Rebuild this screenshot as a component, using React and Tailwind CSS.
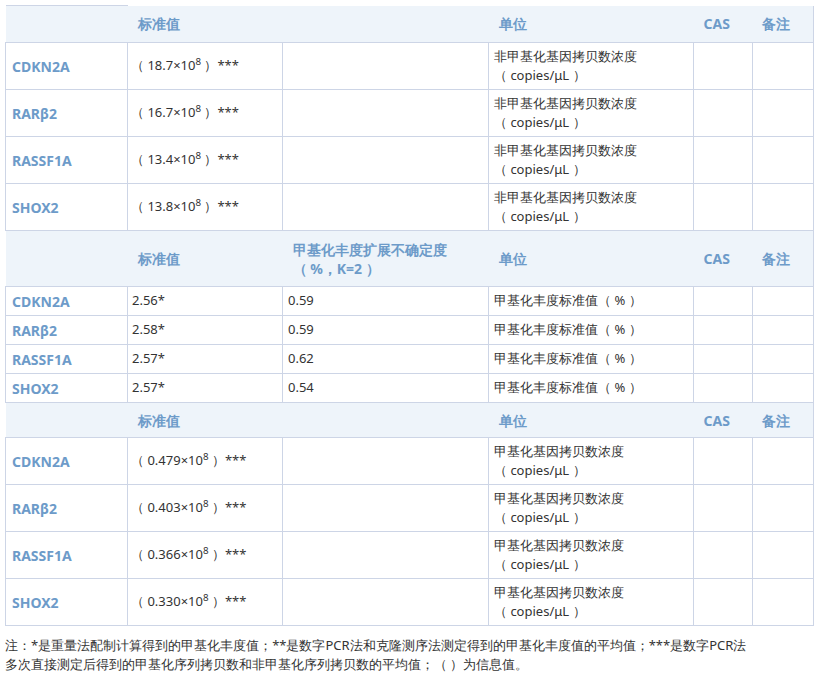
const genes = ["CDKN2A", "RARβ2", "RASSF1A", "SHOX2"];

const t1 = ["18.7", "16.7", "13.4", "13.8"];
const t2 = [
  ["2.56*", "0.59"],
  ["2.58*", "0.59"],
  ["2.57*", "0.62"],
  ["2.57*", "0.54"],
];
const t3 = ["0.479", "0.403", "0.366", "0.330"];

const td = "border border-[#cdd5e6] align-middle";
const th = "text-left font-bold text-[#6d9bc9] align-middle text-[14px]";
const gene = "border border-[#cdd5e6] align-middle pl-[6px] font-bold text-[#6d9bc9] text-[14px]";

function Head({ mid, h }) {
  return (
    <tr className={`bg-[#eef4fa] ${h}`}>
      <th className="border-t border-[#cdd5e6]"></th>
      <th className={`${th} pl-[10px]`}>标准值</th>
      <th className={`${th} pl-[10px] leading-[19px]`}>{mid}</th>
      <th className={`${th} pl-[10px]`}>单位</th>
      <th className={`${th} pl-[10px]`}>CAS</th>
      <th className={`${th} pl-[9px] border-r border-[#cdd5e6]`}>备注</th>
    </tr>
  );
}

function Copies({ label }) {
  return (
    <td className={`${td} pl-[5px] leading-[19px]`}>
      {label}
      <br />（ copies/μL ）
    </td>
  );
}

export default function App() {
  return (
    <div className="bg-white w-[820px] h-[679px] pt-[5px] px-[5px] text-[13px] text-[#333] font-['Open_Sans','Noto_Sans_CJK_SC',sans-serif]">
      <table className="border-collapse table-fixed w-[808px]">
        <colgroup>
          <col className="w-[122px]" />
          <col className="w-[155px]" />
          <col className="w-[206px]" />
          <col className="w-[205px]" />
          <col className="w-[59px]" />
          <col className="w-[61px]" />
        </colgroup>
        <tbody>
          <Head mid="" h="h-[37px]" />
          {genes.map((g, i) => (
            <tr key={"a" + g} className="h-[47px]">
              <td className={gene}>{g}</td>
              <td className={`${td} pl-[3px]`}>
                （ {t1[i]}×10<sup>8</sup> ）***
              </td>
              <td className={td}></td>
              <Copies label="非甲基化基因拷贝数浓度" />
              <td className={td}></td>
              <td className={td}></td>
            </tr>
          ))}
          <Head
            mid={
              <>
                甲基化丰度扩展不确定度
                <br />
                （ %，K=2 ）
              </>
            }
            h="h-[56px]"
          />
          {genes.map((g, i) => (
            <tr key={"b" + g} className="h-[29px]">
              <td className={gene}>{g}</td>
              <td className={`${td} pl-[4px]`}>{t2[i][0]}</td>
              <td className={`${td} pl-[5px]`}>{t2[i][1]}</td>
              <td className={`${td} pl-[5px]`}>甲基化丰度标准值（ % ）</td>
              <td className={td}></td>
              <td className={td}></td>
            </tr>
          ))}
          <Head mid="" h="h-[35px]" />
          {genes.map((g, i) => (
            <tr key={"c" + g} className="h-[47px]">
              <td className={gene}>{g}</td>
              <td className={`${td} pl-[3px]`}>
                （ {t3[i]}×10<sup>8</sup> ）***
              </td>
              <td className={td}></td>
              <Copies label="甲基化基因拷贝数浓度" />
              <td className={td}></td>
              <td className={td}></td>
            </tr>
          ))}
        </tbody>
      </table>
      <p className="mt-[10px] leading-[19px] text-[13px]">
        注：*是重量法配制计算得到的甲基化丰度值；**是数字PCR法和克隆测序法测定得到的甲基化丰度值的平均值；***是数字PCR法
        <br />
        多次直接测定后得到的甲基化序列拷贝数和非甲基化序列拷贝数的平均值；（ ）为信息值。
      </p>
    </div>
  );
}
